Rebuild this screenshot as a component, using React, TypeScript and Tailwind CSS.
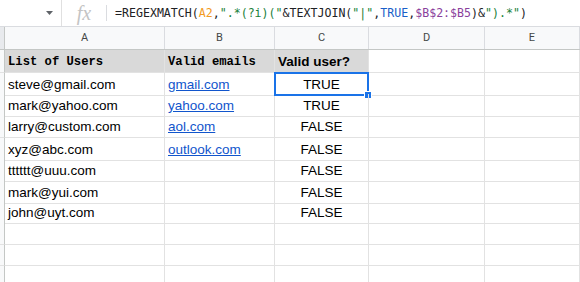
const columns = ["A", "B", "C", "D", "E"];

const rows = [
  { h: "h-[23px]", a: "List of Users", b: "Valid emails", c: "Valid user?", head: true },
  { h: "h-[21px]", a: "steve@gmail.com", b: "gmail.com", c: "TRUE" },
  { h: "h-[21px]", a: "mark@yahoo.com", b: "yahoo.com", c: "TRUE" },
  { h: "h-[23px]", a: "larry@custom.com", b: "aol.com", c: "FALSE" },
  { h: "h-[21px]", a: "xyz@abc.com", b: "outlook.com", c: "FALSE" },
  { h: "h-[22px]", a: "tttttt@uuu.com", b: "", c: "FALSE" },
  { h: "h-[20px]", a: "mark@yui.com", b: "", c: "FALSE" },
  { h: "h-[21px]", a: "john@uyt.com", b: "", c: "FALSE" },
  { h: "h-[23px]", a: "", b: "", c: "" },
  { h: "h-[21px]", a: "", b: "", c: "" },
  { h: "h-[21px]", a: "", b: "", c: "" },
];

const grid = "grid grid-cols-[5px_160px_110px_94px_116px_1fr]";
const cell = "border-r border-b border-[#e2e2e2] flex items-center pt-[2px] overflow-visible whitespace-nowrap";

function FormulaBar() {
  return (
    <div className="h-[27px] flex items-stretch bg-white border-b border-[#dadce0]">
      <div className="w-[62px] flex items-center justify-end pr-[8px] border-r border-[#e0e0e0]">
        <svg width="7" height="4" viewBox="0 0 7 4">
          <path d="M0 0 L7 0 L3.5 4 Z" fill="#5f6368" />
        </svg>
      </div>
      <div className="w-[44px] flex items-center justify-center">
        <span className="font-['Liberation_Serif',serif] italic text-[20px] text-[#c4c4c4] leading-none">fx</span>
      </div>
      <div className="w-px my-[5px] bg-[#dadce0]" />
      <div className="pl-[8px] pt-[1px] flex items-center font-['DejaVu_Sans_Mono',monospace] text-[11.6px] text-[#202124] whitespace-nowrap">
        <span>=REGEXMATCH(</span>
        <span className="text-[#f29b1f]">A2</span>
        <span>,</span>
        <span className="text-[#188038]">".*(?i)("</span>
        <span>&amp;TEXTJOIN(</span>
        <span className="text-[#188038]">"|"</span>
        <span>,</span>
        <span className="text-[#1a5fc9]">TRUE</span>
        <span>,</span>
        <span className="text-[#8a3f9c]">$B$2:$B5</span>
        <span>)&amp;</span>
        <span className="text-[#188038]">").*"</span>
        <span>)</span>
      </div>
    </div>
  );
}

export default function App() {
  return (
    <div className="w-[580px] h-[282px] overflow-hidden bg-white font-['Liberation_Sans',Arial,sans-serif] text-[#000]">
      <FormulaBar />

      {/* Column letters */}
      <div className={`${grid} h-[23px] bg-[#f8f9fa] border-b border-[#c4c7c5]`}>
        <div className="bg-[#e8eaed] border-r border-[#c4c7c5]" />
        {columns.map((c) => (
          <div
            key={c}
            className="flex items-center justify-center border-r border-[#dadce0] text-[11px] text-[#444746] font-['Roboto',sans-serif]"
          >
            {c}
          </div>
        ))}
      </div>

      {rows.map((r, i) => (
        <div key={i} className={`${grid} ${r.h}`}>
          <div className="bg-[#f8f9fa] border-r border-[#c4c7c5] border-b border-b-[#e2e2e2]" />
          {r.head ? (
            <>
              <div className={`${cell} bg-[#d9d9d9] pl-[3px] font-['Liberation_Mono',monospace] font-bold text-[12.2px]`}>{r.a}</div>
              <div className={`${cell} bg-[#d9d9d9] pl-[3px] font-['Liberation_Mono',monospace] font-bold text-[12.2px]`}>{r.b}</div>
              <div className={`${cell} bg-[#d9d9d9] pl-[3px] font-bold text-[13.5px]`}>{r.c}</div>
            </>
          ) : (
            <>
              <div className={`${cell} pl-[3px] text-[13.5px]`}>{r.a}</div>
              <div className={`${cell} pl-[3px] text-[13.5px]`}>
                {r.b && <span className="text-[#1155cc] underline">{r.b}</span>}
              </div>
              <div className={`${cell} relative justify-center text-[13.5px]`}>
                {r.c}
                {i === 1 && (
                  <>
                    <div className="absolute -left-px -top-px right-[-1px] bottom-[-1px] border-2 border-[#1a73e8]" />
                    <div className="absolute right-[-4px] bottom-[-4px] w-[6px] h-[6px] bg-[#1a73e8] border border-white box-content" />
                  </>
                )}
              </div>
            </>
          )}
          <div className={cell} />
          <div className={cell} />
        </div>
      ))}
    </div>
  );
}
